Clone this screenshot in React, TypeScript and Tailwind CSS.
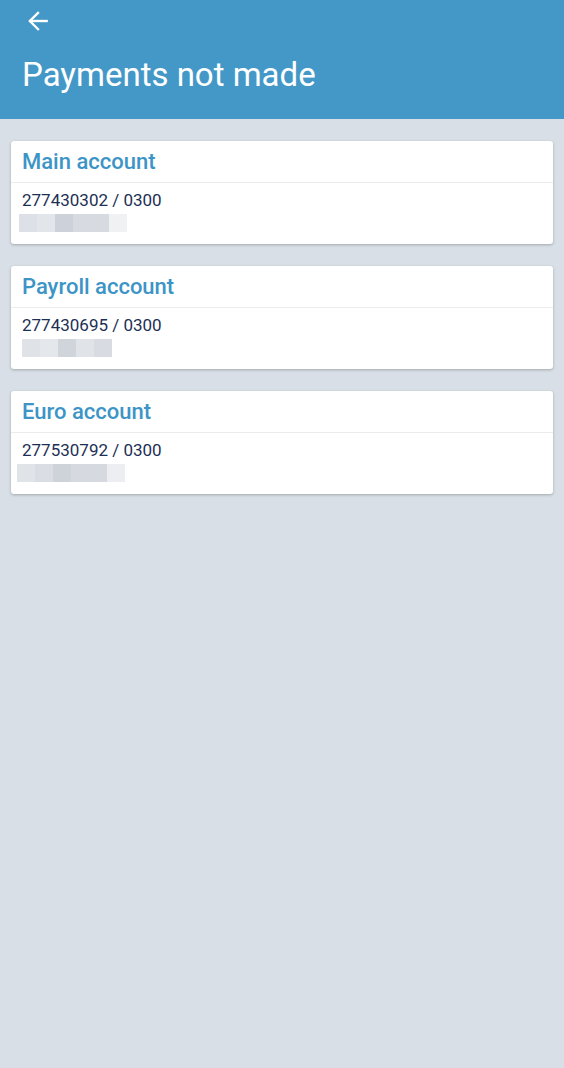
import React from 'react';

type Account = {
    name: string;
    number: string;
    blur: { w: number; c: string }[];
    offset: number;
};

const accounts: Account[] = [
    {
        name: 'Main account',
        number: '277430302 / 0300',
        offset: 8,
        blur: [
            { w: 18, c: '#dde1e7' },
            { w: 18, c: '#e2e5ea' },
            { w: 18, c: '#cdd2da' },
            { w: 36, c: '#d7dbe1' },
            { w: 18, c: '#eff1f3' },
        ],
    },
    {
        name: 'Payroll account',
        number: '277430695 / 0300',
        offset: 11,
        blur: [
            { w: 18, c: '#dfe2e7' },
            { w: 18, c: '#e4e7eb' },
            { w: 18, c: '#d0d5dc' },
            { w: 18, c: '#e0e3e8' },
            { w: 18, c: '#d8dce2' },
        ],
    },
    {
        name: 'Euro account',
        number: '277530792 / 0300',
        offset: 6,
        blur: [
            { w: 18, c: '#e0e3e8' },
            { w: 18, c: '#dadee4' },
            { w: 18, c: '#ced3da' },
            { w: 36, c: '#d6dae0' },
            { w: 18, c: '#eceef1' },
        ],
    },
];

function AccountCard({ account }: { account: Account }) {
    return (
        <div className="bg-white rounded-[3px] shadow-[0_1px_3px_rgba(0,0,0,0.25)]">
            <div className="h-[42px] flex items-center px-[11px] border-b border-[#ececec]">
                <span className="text-[22px] font-medium text-[#3d94c6]">{account.name}</span>
            </div>
            <div className="px-[11px] pt-[7px] pb-[12px]">
                <div className="text-[17px] leading-[20px] text-[#1d2f55]">{account.number}</div>
                <div className="flex h-[18px] mt-[4px]" style={{ marginLeft: account.offset - 11 }}>
                    {account.blur.map((b, i) => (
                        <div key={i} style={{ width: b.w, backgroundColor: b.c }} />
                    ))}
                </div>
            </div>
        </div>
    );
}

export default function App() {
    return (
        <div className="min-h-[1068px] bg-[#d8dfe6]" style={{ fontFamily: 'Roboto, "Noto Sans", sans-serif' }}>
            <header className="bg-[#4398c8] h-[119px] px-[22px] pt-[8px]">
                <svg width="26" height="26" viewBox="0 0 24 24" fill="none" stroke="white" strokeWidth="2.2" strokeLinecap="square" className="ml-[3px]">
                    <path d="M20 12H5" />
                    <path d="M12 4.5L4.5 12L12 19.5" />
                </svg>
                <h1 className="text-white text-[33px] leading-[40px] mt-[21px]">Payments not made</h1>
            </header>
            <main className="flex flex-col gap-[22px] px-[11px] pt-[22px]">
                {accounts.map((a) => (
                    <AccountCard key={a.name} account={a} />
                ))}
            </main>
        </div>
    );
}
